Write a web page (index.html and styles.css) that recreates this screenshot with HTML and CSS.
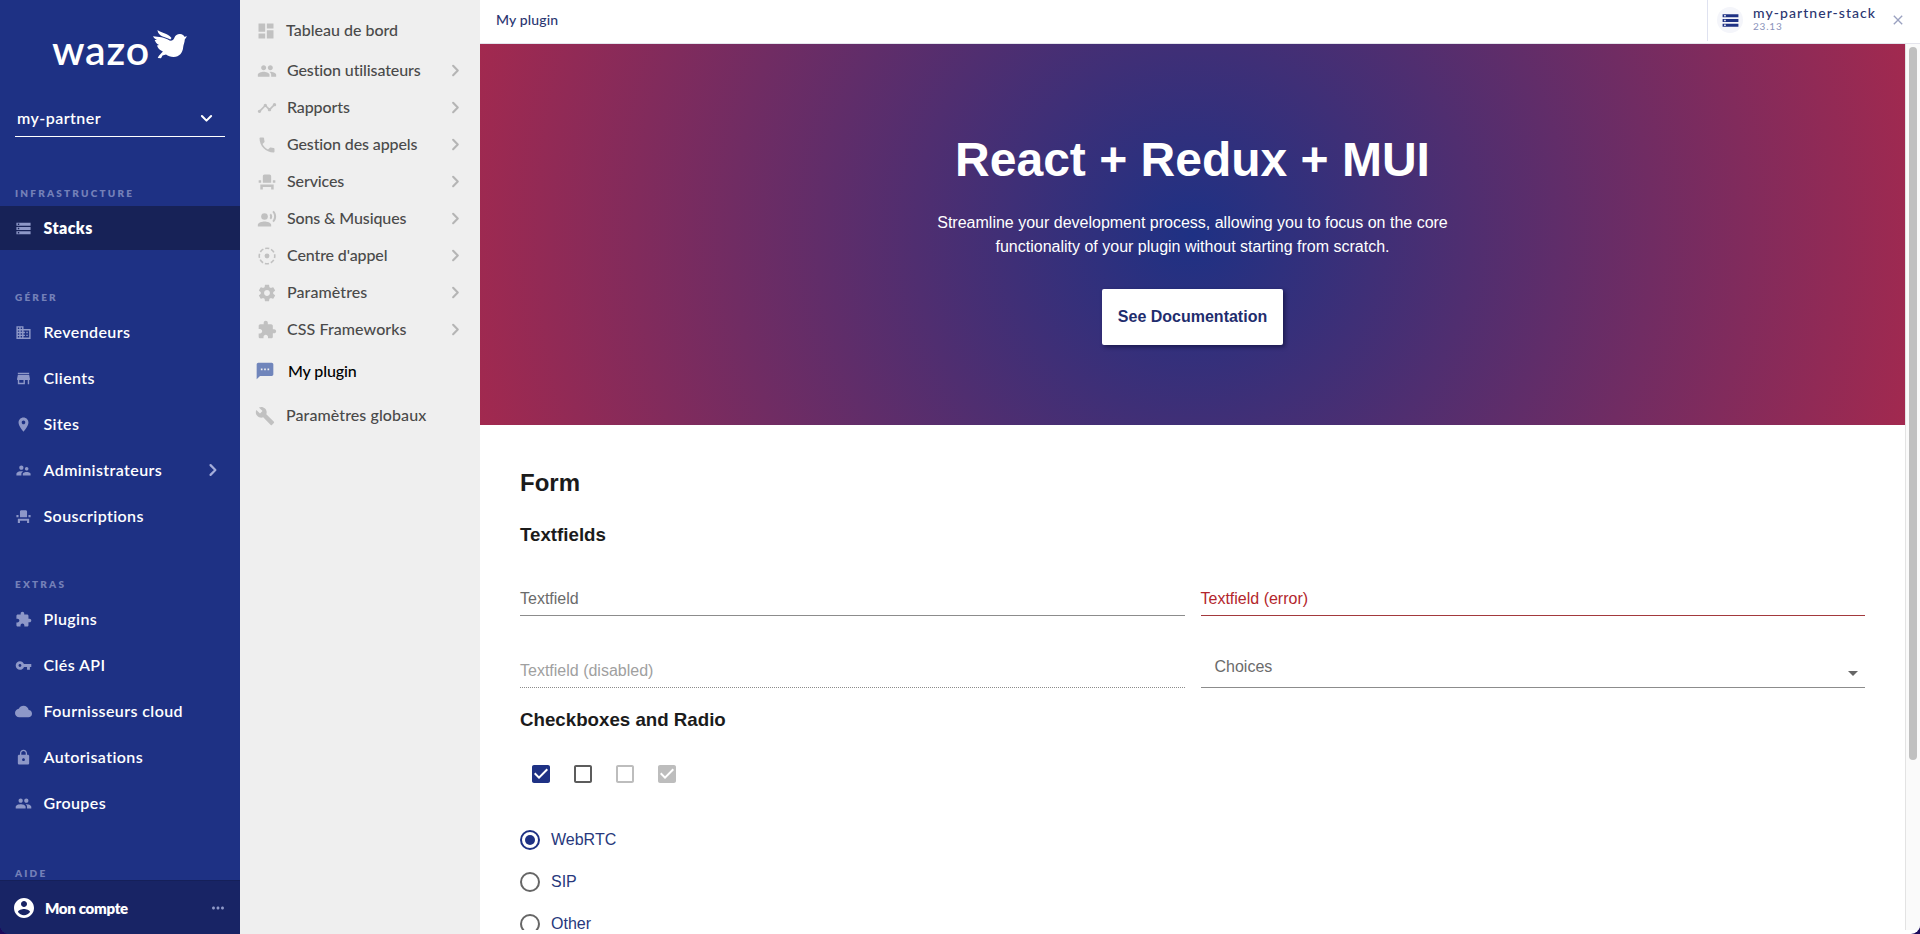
FILE: index.html
```html
<!DOCTYPE html>
<html lang="fr">
<head>
<meta charset="utf-8">
<title>My plugin</title>
<link rel="stylesheet" href="styles.css">
</head>
<body>
<svg class="sprite" aria-hidden="true">
  <symbol id="storage" viewBox="0 0 24 24"><path d="M2 20h20v-4H2v4zm2-3h2v2H4v-2zM2 4v4h20V4H2zm4 3H4V5h2v2zm-4 7h20v-4H2v4zm2-3h2v2H4v-2z"/></symbol>
  <symbol id="domain" viewBox="0 0 24 24"><path d="M12 7V3H2v18h20V7H12zM6 19H4v-2h2v2zm0-4H4v-2h2v2zm0-4H4V9h2v2zm0-4H4V5h2v2zm4 12H8v-2h2v2zm0-4H8v-2h2v2zm0-4H8V9h2v2zm0-4H8V5h2v2zm10 12h-8v-2h2v-2h-2v-2h2v-2h-2V9h8v10zm-2-8h-2v2h2v-2zm0 4h-2v2h2v-2z"/></symbol>
  <symbol id="store" viewBox="0 0 24 24"><path d="M20 4H4v2h16V4zm1 10v-2l-1-5H4l-1 5v2h1v6h10v-6h4v6h2v-6h1zm-9 4H6v-4h6v4z"/></symbol>
  <symbol id="place" viewBox="0 0 24 24"><path d="M12 2C8.13 2 5 5.13 5 9c0 5.25 7 13 7 13s7-7.75 7-13c0-3.87-3.13-7-7-7zm0 9.5c-1.38 0-2.5-1.12-2.5-2.5s1.12-2.5 2.5-2.5 2.5 1.12 2.5 2.5-1.12 2.5-2.5 2.5z"/></symbol>
  <symbol id="admins" viewBox="0 0 24 24"><path d="M16.5 12c1.38 0 2.49-1.12 2.49-2.5S17.88 7 16.5 7C15.12 7 14 8.12 14 9.5s1.12 2.5 2.5 2.5zM9 11c1.66 0 2.99-1.34 2.99-3S10.66 5 9 5C7.34 5 6 6.34 6 8s1.34 3 3 3zm7.5 3c-1.83 0-5.5.92-5.5 2.75V19h11v-2.25c0-1.83-3.67-2.75-5.5-2.75zM9 13c-2.33 0-7 1.17-7 3.5V19h7v-2.25c0-.85.33-2.34 2.37-3.47C10.5 13.1 9.66 13 9 13z"/></symbol>
  <symbol id="seat" viewBox="0 0 24 24"><path d="M4 18v3h3v-3h10v3h3v-6H4zm15-8h3v3h-3zM2 10h3v3H2zm15 3H7V5c0-1.1.9-2 2-2h6c1.1 0 2 .9 2 2v8z"/></symbol>
  <symbol id="extension" viewBox="0 0 24 24"><path d="M20.5 11H19V7c0-1.1-.9-2-2-2h-4V3.5C13 2.12 11.88 1 10.5 1S8 2.12 8 3.5V5H4c-1.1 0-1.99.9-1.99 2v3.8H3.5c1.49 0 2.7 1.21 2.7 2.7s-1.21 2.7-2.7 2.7H2V20c0 1.1.9 2 2 2h3.8v-1.5c0-1.49 1.21-2.7 2.7-2.7 1.49 0 2.7 1.21 2.7 2.7V22H17c1.1 0 2-.9 2-2v-4h1.5c1.38 0 2.5-1.12 2.5-2.5S21.88 11 20.5 11z"/></symbol>
  <symbol id="key" viewBox="0 0 24 24"><path d="M12.65 10C11.83 7.67 9.61 6 7 6c-3.31 0-6 2.69-6 6s2.69 6 6 6c2.61 0 4.83-1.67 5.65-4H17v4h4v-4h2v-4H12.65zM7 14c-1.1 0-2-.9-2-2s.9-2 2-2 2 .9 2 2-.9 2-2 2z"/></symbol>
  <symbol id="cloud" viewBox="0 0 24 24"><path d="M19.35 10.04C18.67 6.59 15.64 4 12 4 9.11 4 6.6 5.64 5.35 8.04 2.34 8.36 0 10.91 0 14c0 3.31 2.69 6 6 6h13c2.76 0 5-2.24 5-5 0-2.64-2.05-4.78-4.65-4.96z"/></symbol>
  <symbol id="lock" viewBox="0 0 24 24"><path d="M18 8h-1V6c0-2.76-2.24-5-5-5S7 3.24 7 6v2H6c-1.1 0-2 .9-2 2v10c0 1.1.9 2 2 2h12c1.1 0 2-.9 2-2V10c0-1.1-.9-2-2-2zm-6 9c-1.1 0-2-.9-2-2s.9-2 2-2 2 .9 2 2-.9 2-2 2zm3.1-9H8.9V6c0-1.71 1.39-3.1 3.1-3.1 1.71 0 3.1 1.39 3.1 3.1v2z"/></symbol>
  <symbol id="group" viewBox="0 0 24 24"><path d="M16 11c1.66 0 2.99-1.34 2.99-3S17.66 5 16 5c-1.66 0-3 1.34-3 3s1.34 3 3 3zm-8 0c1.66 0 2.99-1.34 2.99-3S9.66 5 8 5C6.34 5 5 6.34 5 8s1.34 3 3 3zm0 2c-2.33 0-7 1.17-7 3.5V19h14v-2.5c0-2.33-4.67-3.5-7-3.5zm8 0c-.29 0-.62.02-.97.05 1.16.84 1.97 1.97 1.97 3.45V19h6v-2.5c0-2.33-4.67-3.5-7-3.5z"/></symbol>
  <symbol id="account" viewBox="0 0 24 24"><path d="M12 2C6.48 2 2 6.48 2 12s4.48 10 10 10 10-4.48 10-10S17.52 2 12 2zm0 3c1.66 0 3 1.34 3 3s-1.34 3-3 3-3-1.34-3-3 1.34-3 3-3zm0 14.2c-2.5 0-4.71-1.28-6-3.22.03-1.99 4-3.08 6-3.08 1.99 0 5.97 1.09 6 3.08-1.29 1.94-3.5 3.22-6 3.22z"/></symbol>
  <symbol id="more" viewBox="0 0 24 24"><path d="M6 10c-1.1 0-2 .9-2 2s.9 2 2 2 2-.9 2-2-.9-2-2-2zm12 0c-1.1 0-2 .9-2 2s.9 2 2 2 2-.9 2-2-.9-2-2-2zm-6 0c-1.1 0-2 .9-2 2s.9 2 2 2 2-.9 2-2-.9-2-2-2z"/></symbol>
  <symbol id="dashboard" viewBox="0 0 24 24"><path d="M3 13h8V3H3v10zm0 8h8v-6H3v6zm10 0h8V11h-8v10zm0-18v6h8V3h-8z"/></symbol>
  <symbol id="timeline" viewBox="0 0 24 24"><path d="M23 8c0 1.1-.9 2-2 2-.18 0-.35-.02-.51-.07l-3.56 3.55c.05.16.07.34.07.52 0 1.1-.9 2-2 2s-2-.9-2-2c0-.18.02-.36.07-.52l-2.55-2.55c-.16.05-.34.07-.52.07s-.36-.02-.52-.07l-4.55 4.56c.05.16.07.33.07.51 0 1.1-.9 2-2 2s-2-.9-2-2 .9-2 2-2c.18 0 .35.02.51.07l4.56-4.55C8.02 9.36 8 9.18 8 9c0-1.1.9-2 2-2s2 .9 2 2c0 .18-.02.36-.07.52l2.55 2.55c.16-.05.34-.07.52-.07s.36.02.52.07l3.55-3.56C19.02 8.35 19 8.18 19 8c0-1.1.9-2 2-2s2 .9 2 2z"/></symbol>
  <symbol id="phone" viewBox="0 0 24 24"><path d="M6.62 10.79c1.44 2.83 3.76 5.14 6.59 6.59l2.2-2.2c.27-.27.67-.36 1.02-.24 1.12.37 2.33.57 3.57.57.55 0 1 .45 1 1V20c0 .55-.45 1-1 1-9.39 0-17-7.61-17-17 0-.55.45-1 1-1h3.5c.55 0 1 .45 1 1 0 1.25.2 2.45.57 3.57.11.35.03.74-.25 1.02l-2.2 2.2z"/></symbol>
  <symbol id="voice" viewBox="0 0 24 24"><circle cx="9" cy="9" r="4"/><path d="M9 15c-2.67 0-8 1.34-8 4v2h16v-2c0-2.66-5.33-4-8-4zm7.76-9.64l-1.68 1.69c.84 1.18.84 2.71 0 3.89l1.68 1.69c2.02-2.02 2.02-5.07 0-7.27zM20.07 2l-1.63 1.63c2.77 3.02 2.77 7.56 0 10.74L20.07 16c3.9-3.89 3.91-9.95 0-14z"/></symbol>
  <symbol id="center" viewBox="0 0 24 24"><circle cx="12" cy="12" r="2.9"/><circle cx="12" cy="12" r="9.3" fill="none" stroke="currentColor" stroke-width="1.9" stroke-dasharray="5 2.304" stroke-dashoffset="2.5"/></symbol>
  <symbol id="settings" viewBox="0 0 24 24"><path d="M19.43 12.98c.04-.32.07-.64.07-.98s-.03-.66-.07-.98l2.11-1.65c.19-.15.24-.42.12-.64l-2-3.46c-.12-.22-.39-.3-.61-.22l-2.49 1c-.52-.4-1.08-.73-1.69-.98l-.38-2.65C14.46 2.18 14.25 2 14 2h-4c-.25 0-.46.18-.49.42l-.38 2.65c-.61.25-1.17.59-1.69.98l-2.49-1c-.23-.09-.49 0-.61.22l-2 3.46c-.13.22-.07.49.12.64l2.11 1.65c-.04.32-.07.65-.07.98s.03.66.07.98l-2.11 1.65c-.19.15-.24.42-.12.64l2 3.46c.12.22.39.3.61.22l2.49-1c.52.4 1.08.73 1.69.98l.38 2.65c.03.24.24.42.49.42h4c.25 0 .46-.18.49-.42l.38-2.65c.61-.25 1.17-.59 1.69-.98l2.49 1c.23.09.49 0 .61-.22l2-3.46c.12-.22.07-.49-.12-.64l-2.11-1.65zM12 15.5c-1.93 0-3.5-1.57-3.5-3.5s1.57-3.5 3.5-3.5 3.5 1.57 3.5 3.5-1.57 3.5-3.5 3.5z"/></symbol>
  <symbol id="sms" viewBox="0 0 24 24"><path d="M20 2H4c-1.1 0-1.99.9-1.99 2L2 22l4-4h14c1.1 0 2-.9 2-2V4c0-1.1-.9-2-2-2zM9 11H7V9h2v2zm4 0h-2V9h2v2zm4 0h-2V9h2v2z"/></symbol>
  <symbol id="build" viewBox="0 0 24 24"><path d="M22.7 19l-9.1-9.1c.9-2.3.4-5-1.5-6.9-2-2-5-2.4-7.4-1.3L9 6 6 9 1.6 4.7C.4 7.1.9 10.1 2.9 12.1c1.9 1.9 4.6 2.4 6.9 1.5l9.1 9.1c.4.4 1 .4 1.4 0l2.3-2.3c.5-.4.5-1.1.1-1.4z"/></symbol>
  <symbol id="right" viewBox="0 0 24 24"><path d="M9.3 6.7l5.3 5.3-5.3 5.3" fill="none" stroke="currentColor" stroke-width="2.4" stroke-linecap="round" stroke-linejoin="round"/></symbol>
  <symbol id="down" viewBox="0 0 24 24"><path d="M5.5 8.5l6.5 6.5 6.5-6.5" fill="none" stroke="currentColor" stroke-width="2.9" stroke-linecap="round" stroke-linejoin="round"/></symbol>
  <symbol id="close" viewBox="0 0 24 24"><path d="M19 6.41L17.59 5 12 10.59 6.41 5 5 6.41 10.59 12 5 17.59 6.41 19 12 13.41 17.59 19 19 17.59 13.41 12z"/></symbol>
  <symbol id="box" viewBox="0 0 24 24"><path d="M19 5v14H5V5h14m0-2H5c-1.1 0-2 .9-2 2v14c0 1.1.9 2 2 2h14c1.1 0 2-.9 2-2V5c0-1.1-.9-2-2-2z"/></symbol>
  <symbol id="boxon" viewBox="0 0 24 24"><path d="M19 3H5c-1.11 0-2 .9-2 2v14c0 1.1.89 2 2 2h14c1.11 0 2-.9 2-2V5c0-1.1-.89-2-2-2zm-9 14l-5-5 1.41-1.41L10 14.17l7.59-7.59L19 8l-9 9z"/></symbol>
  <symbol id="radio" viewBox="0 0 24 24"><circle cx="12" cy="12" r="9" fill="none" stroke="currentColor" stroke-width="2"/></symbol>
</svg>

<div class="app">
  <aside class="sidebar">
    <div class="logo">
      <span class="wordmark">wazo</span>
      <svg class="bird" viewBox="0 0 34 29"><path d="M4.5 0C8 2.800 14.500 3 18.500 8L17.300 9.500C12 6.800 5 6.500 4.500 0z"/><path d="M0 6.300C6 6.800 11 7 16.500 10.600 19 11 20.500 10 21.500 7.500 22.300 5 24.500 3.800 27 3.900c2.500.1 4 1.400 4.400 2.900L34 6.300 31.800 9.500c-.2 3.300-1.300 4.800-1.600 7.500-.5 6-4 10-9.700 9.900-3 0-5.500-.8-7.500-2.400L9.500 25.500 8 28.300l-3.300-.4 1.200-2.200 4-4.200C6.500 20 4.800 17.800 4 15.400l2-.4C3.500 13.500 2.200 11.700 1.700 9.900l2.200.1C1.800 8.900.6 7.800 0 6.300z"/></svg>
    </div>
    <div class="tenant"><span>my-partner</span><svg class="tenant-arrow"><use href="#down"/></svg></div>
    <h6 class="group-title">INFRASTRUCTURE</h6>
    <nav class="group">
      <a class="nav-item active"><svg class="ico"><use href="#storage"/></svg><span>Stacks</span></a>
    </nav>
    <h6 class="group-title gerer">GÉRER</h6>
    <nav class="group">
      <a class="nav-item"><svg class="ico"><use href="#domain"/></svg><span>Revendeurs</span></a>
      <a class="nav-item"><svg class="ico"><use href="#store"/></svg><span>Clients</span></a>
      <a class="nav-item"><svg class="ico"><use href="#place"/></svg><span>Sites</span></a>
      <a class="nav-item"><svg class="ico"><use href="#admins"/></svg><span>Administrateurs</span><svg class="arrow"><use href="#right"/></svg></a>
      <a class="nav-item"><svg class="ico"><use href="#seat"/></svg><span>Souscriptions</span></a>
    </nav>
    <h6 class="group-title extras">EXTRAS</h6>
    <nav class="group">
      <a class="nav-item"><svg class="ico"><use href="#extension"/></svg><span>Plugins</span></a>
      <a class="nav-item"><svg class="ico"><use href="#key"/></svg><span>Clés API</span></a>
      <a class="nav-item"><svg class="ico"><use href="#cloud"/></svg><span>Fournisseurs cloud</span></a>
      <a class="nav-item"><svg class="ico"><use href="#lock"/></svg><span>Autorisations</span></a>
      <a class="nav-item"><svg class="ico"><use href="#group"/></svg><span>Groupes</span></a>
    </nav>
    <h6 class="group-title aide">AIDE</h6>
    <div class="account"><svg class="avatar"><use href="#account"/></svg><span>Mon compte</span><svg class="more"><use href="#more"/></svg></div>
  </aside>

  <nav class="menu">
    <a class="menu-item first"><svg class="mico"><use href="#dashboard"/></svg><span>Tableau de bord</span></a>
    <a class="menu-item"><svg class="mico"><use href="#group"/></svg><span>Gestion utilisateurs</span><svg class="arrow"><use href="#right"/></svg></a>
    <a class="menu-item"><svg class="mico"><use href="#timeline"/></svg><span>Rapports</span><svg class="arrow"><use href="#right"/></svg></a>
    <a class="menu-item"><svg class="mico"><use href="#phone"/></svg><span>Gestion des appels</span><svg class="arrow"><use href="#right"/></svg></a>
    <a class="menu-item"><svg class="mico"><use href="#seat"/></svg><span>Services</span><svg class="arrow"><use href="#right"/></svg></a>
    <a class="menu-item"><svg class="mico"><use href="#voice"/></svg><span>Sons &amp; Musiques</span><svg class="arrow"><use href="#right"/></svg></a>
    <a class="menu-item"><svg class="mico"><use href="#center"/></svg><span>Centre d'appel</span><svg class="arrow"><use href="#right"/></svg></a>
    <a class="menu-item roomy"><svg class="mico"><use href="#settings"/></svg><span>Paramètres</span><svg class="arrow"><use href="#right"/></svg></a>
    <a class="menu-item roomy"><svg class="mico"><use href="#extension"/></svg><span>CSS Frameworks</span><svg class="arrow"><use href="#right"/></svg></a>
    <a class="menu-item current"><svg class="mico"><use href="#sms"/></svg><span>My plugin</span></a>
    <a class="menu-item roomy last"><svg class="mico"><use href="#build"/></svg><span>Paramètres globaux</span></a>
  </nav>

  <div class="main">
    <header class="topbar">
      <span class="crumb">My plugin</span>
      <div class="stack">
        <span class="stack-badge"><svg class="stack-ico"><use href="#storage"/></svg></span>
        <div class="stack-text"><span class="stack-name">my-partner-stack</span><span class="stack-version">23.13</span></div>
        <svg class="stack-close"><use href="#close"/></svg>
      </div>
    </header>
    <div class="body">
      <div class="content">
        <section class="hero">
          <h1 class="hero-title">React + Redux + MUI</h1>
          <p class="hero-text">Streamline your development process, allowing you to focus on the core<br>functionality of your plugin without starting from scratch.</p>
          <a class="hero-button">See Documentation</a>
        </section>
        <section class="form">
          <h2 class="form-title">Form</h2>
          <h3 class="form-sub">Textfields</h3>
          <div class="fields">
            <div class="field"><span>Textfield</span></div>
            <div class="field error"><span>Textfield (error)</span></div>
            <div class="field disabled"><span>Textfield (disabled)</span></div>
            <div class="field select"><span>Choices</span><i class="caret"></i></div>
          </div>
          <h3 class="form-sub checks-title">Checkboxes and Radio</h3>
          <div class="checks">
            <svg class="check on"><use href="#boxon"/></svg>
            <svg class="check"><use href="#box"/></svg>
            <svg class="check off"><use href="#box"/></svg>
            <svg class="check off"><use href="#boxon"/></svg>
          </div>
          <div class="radios">
            <label class="radio on"><svg class="dot"><use href="#radio"/><circle cx="12" cy="12" r="5"/></svg><span>WebRTC</span></label>
            <label class="radio"><svg class="dot"><use href="#radio"/></svg><span>SIP</span></label>
            <label class="radio"><svg class="dot"><use href="#radio"/></svg><span>Other</span></label>
          </div>
        </section>
      </div>
      <div class="scrollbar"><div class="thumb"></div></div>
    </div>
  </div>
</div>
</body>
</html>
```
FILE: styles.css
```css
* { box-sizing: border-box; }
body { margin: 0; background: #1c0a5c; font-family: "Liberation Sans", Arial, sans-serif; }
h1, h2, h3, h6, p { margin: 0; }
svg { fill: currentColor; display: block; flex: none; }
.sprite { position: absolute; width: 0; height: 0; }
.app { display: flex; width: 1920px; height: 934px; overflow: hidden; border-radius: 0 0 9px 9px; }

/* primary sidebar */
.sidebar { width: 240px; background: #1e3184; color: #fff; display: flex; flex-direction: column; font-family: Lato, "Open Sans", sans-serif; }
.sidebar > * { flex-shrink: 0; }
.logo { display: flex; height: 96px; padding: 30px 0 0 53px; }
.wordmark { width: 100px; font-size: 41px; font-weight: 600; line-height: 39px; height: 40px; letter-spacing: .8px; text-indent: -1px; white-space: nowrap; }
.bird { width: 34px; height: 29px; }
.tenant { display: flex; align-items: center; justify-content: space-between; height: 41px; margin: 0 15px; padding: 5px 10px 0 2px; border-bottom: 1px solid #fff; font-size: 16px; font-weight: 600; letter-spacing: .45px; }
.tenant span { margin-top: -2px; }
.tenant-arrow { width: 17px; height: 17px; margin-top: -1px; }
.group-title { height: 25px; margin: 44px 0 0 15px; padding-top: 6px; line-height: 12px; font-size: 10px; font-weight: 800; letter-spacing: 2.2px; color: #7480b8; }
.gerer { margin-top: 35px; }
.extras { margin-top: 34px; }
.aide { height: 19px; margin-top: 36px; }
.group { display: flex; flex-direction: column; gap: 2px; }
.nav-item { display: flex; align-items: center; height: 44px; padding: 0 16px 0 15px; font-size: 16px; font-weight: 600; letter-spacing: .4px; }
.nav-item span { flex: 1; margin-top: -1px; }
.nav-item.active { background: #172257; font-weight: 800; }
.ico { width: 17px; height: 17px; margin-right: 11.5px; color: #8e98c8; }
.nav-item .arrow { width: 22px; height: 22px; color: #a5adda; }
.account { display: flex; align-items: center; height: 54px; padding: 0 13px 0 12px; background: #182465; border-top: 1px solid #152059; font-size: 15px; font-weight: 800; letter-spacing: -.3px; }
.account span { flex: 1; }
.avatar { width: 24px; height: 24px; margin-right: 9px; }
.more { width: 18px; height: 18px; color: #8e98c8; }

/* secondary menu */
.menu { width: 240px; background: #efefef; color: #4a4a4a; font-family: Lato, "Open Sans", sans-serif; font-size: 16px; font-weight: 500; }
.menu-item { display: flex; align-items: center; height: 37px; padding: 0 14px 0 17px; letter-spacing: -.12px; }
.menu-item span { flex: 1; margin-top: -2px; }
.menu-item .arrow { width: 21px; height: 21px; color: #b5b5b5; }
.mico { width: 20px; height: 20px; margin-right: 10px; color: #c1c1c1; }
.first { height: 52px; padding: 9px 0 0 16px; letter-spacing: 0; }
.current { height: 46px; color: #000; padding-left: 15px; }
.current .mico { color: #7085bb; margin-right: 13px; }
.roomy { letter-spacing: .08px; }
.last { height: 43px; padding-left: 15px; }
.last .mico { margin-right: 11px; }

/* top bar */
.main { flex: 1; background: #fff; display: flex; flex-direction: column; }
.topbar { height: 44px; display: flex; justify-content: space-between; align-items: flex-start; border-bottom: 1px solid #e4e4ec; font-family: Lato, "Open Sans", sans-serif; color: #2a3671; }
.crumb { padding: 11px 0 0 16px; font-size: 14px; line-height: 18px; letter-spacing: .15px; font-weight: 500; }
.stack { width: 213px; height: 41px; border-left: 1px solid #dfe2f0; display: flex; }
.stack-badge { width: 26px; height: 26px; margin: 7px 10px 0 9px; border-radius: 50%; background: #f4f5fa; display: grid; place-items: center; }
.stack-ico { width: 19px; height: 19px; color: #1e3184; }
.stack-text { display: flex; flex-direction: column; width: 137px; padding-top: 4px; }
.stack-name { font-size: 14px; line-height: 17px; font-weight: 500; letter-spacing: 1.05px; white-space: nowrap; }
.stack-version { font-size: 10px; line-height: 11px; letter-spacing: .8px; color: #8a93bb; }
.stack-close { width: 16px; height: 16px; margin-top: 12px; color: #9aa1c0; }

/* page body */
.body { display: flex; height: 886px; overflow: hidden; }
.content { width: 1425px; }
.hero { height: 381px; padding-top: 85px; display: flex; flex-direction: column; align-items: center; color: #fff; text-align: center; background: radial-gradient(circle, #1e3184, #a2294f); }
.hero-title { font-size: 48px; line-height: 62px; font-weight: 700; }
.hero-text { margin-top: 20px; font-size: 16px; line-height: 24px; }
.hero-button { margin-top: 30px; width: 181px; height: 56px; line-height: 55px; border-radius: 2px; background: #fff; color: #1f2d6e; font-size: 16px; font-weight: 700; box-shadow: 2px 2px 4px rgba(10, 10, 50, .6); }
.form { padding: 42px 40px 0; color: #1b1b1b; }
.form-title { font-size: 24px; line-height: 32px; }
.form-sub { margin-top: 24px; font-size: 18.72px; line-height: 24px; }
.fields { display: grid; grid-template-columns: 1fr 1fr; grid-template-rows: 69px 72px; column-gap: 16px; color: #6b6b6b; font-size: 16px; }
.field { display: flex; align-items: flex-end; padding-bottom: 7px; border-bottom: 1px solid #8c8c8c; }
.field.error { color: #b3262c; border-color: #a3393d; }
.field.disabled { color: #a0a0a0; border-bottom-style: dotted; }
.field.select { justify-content: space-between; padding: 0 7px 11px 14px; }
.caret { border: 5px solid transparent; border-top-color: #666; border-bottom: 0; }
.checks-title { margin-top: 20px; }
.checks { display: flex; gap: 18px; padding: 30px 0 0 9px; color: #5c5c5c; }
.check { width: 24px; height: 24px; }
.on { color: #1e3184; }
.off { color: #bdbdbd; }
.radios { display: flex; flex-direction: column; margin-top: 33px; }
.radio { display: flex; align-items: center; height: 42px; color: #666; font-size: 16px; }
.radio span { margin-left: 9px; color: #27387c; }
.dot { width: 24px; height: 24px; margin-left: -2px; }
.radio.on { color: #1e3184; }
.scrollbar { width: 15px; background: #fafafa; border-left: 1px solid #e3e3e3; padding: 3px 0 0 3px; }
.thumb { width: 8px; height: 713px; border-radius: 4px; background: #c0c0c0; }
```
